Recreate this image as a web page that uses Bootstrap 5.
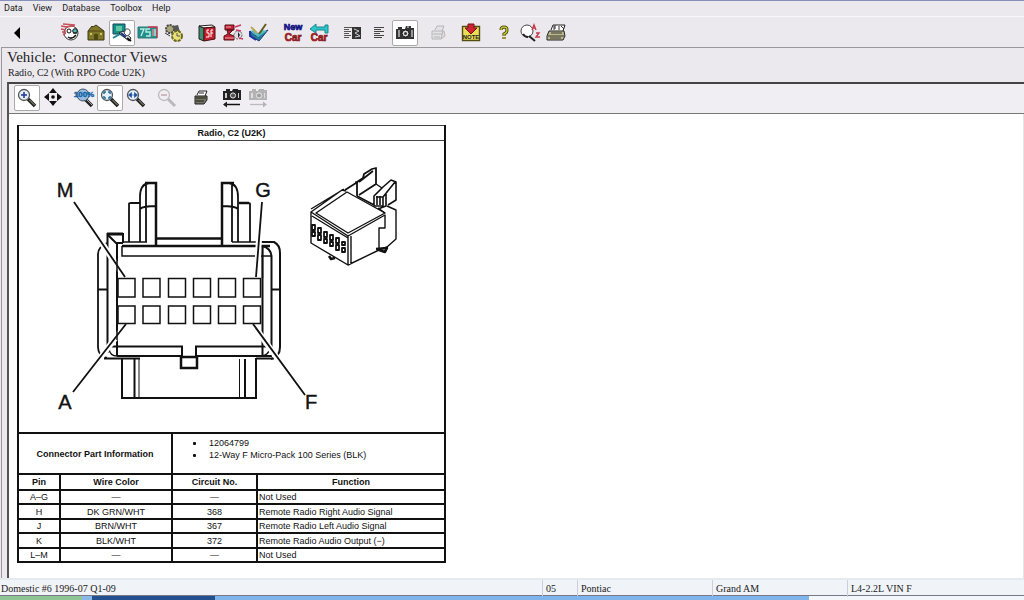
<!DOCTYPE html>
<html lang="en">
<head>
<meta charset="utf-8">
<meta name="viewport" content="width=device-width, initial-scale=1">
<title>Vehicle: Connector Views</title>
<link href="https://cdn.jsdelivr.net/npm/bootstrap@5.3.0/dist/css/bootstrap.min.css" rel="stylesheet">
<style>
:root{--face:#ece9ee;--ink:#222;}
body{background:var(--face);color:var(--ink);font-family:"Liberation Serif",serif;}
.menubar{height:17px;border-top:1px solid #8790b8;padding-left:4px;gap:10px;font:9px/14px Roboto,sans-serif;border-bottom:1px solid #f8f8fa;}
.menubar a{color:#222;text-decoration:none;}
.toolstrip{height:30px;}
.main-tools{padding:3px 0 0 5px;}
.view-tools{padding:1px 0 0 5px;border-bottom:1px solid #777;background:#f0eef2;}
.tool{width:26px;height:26px;padding:0;border:1px solid transparent;border-radius:2px;background:none;display:block;flex:none;}
.tool.on{background:#fff;border-color:#aaa;}
.tool svg,.sheet svg{display:block;}
.g4{margin-left:5px}.g7{margin-left:7px}.g8{margin-left:8px}.g26{margin-left:26px}
.pane{border-top:1px solid #999;border-left:1px solid #999;margin-left:1px;}
.pane h1{font-size:15px;font-weight:400;line-height:19px;margin:0;padding:0 0 0 5px;white-space:pre;}
.pane h2{font-size:10px;line-height:12px;margin:0;padding:0 0 3px 6px;font-weight:400;}
.viewer{margin-left:5px;border-top:2px solid #444;border-left:2px solid #555;}
.canvas-area{background:#fff;padding:11px 0 0 8px;border-right:1px solid #e4e4e4;}
.sheet{width:429px;table-layout:fixed;border-collapse:collapse;border:2px solid #111;border-top:1px solid #444;font:9px/12px "Liberation Sans",sans-serif;color:#111;text-align:center;}
.sheet td,.sheet th{border:2px solid #111;padding:0 1px;height:14px;}
.sheet .heading th{border:1px solid #444;height:15px;}
.sheet .figure-row td{padding:0;border-top:1px solid #444;}
.sheet .info-row>*{height:41px;}
.sheet .cols th{height:16px;}
.sheet .pin-row:nth-child(even) td{height:15px;}
.sheet td:last-child{text-align:left;}
.sheet ul{margin:0;padding-left:35px;list-style:none;height:34px;}
.sheet li{position:relative}
.sheet li::before{content:"";position:absolute;left:-16px;top:5px;width:3px;height:3px;background:#111;border-radius:1px;}
.status{display:grid;grid-template-columns:1fr 35px 135px 135px 177px;height:18px;border-top:2px solid #e4eaee;background:#f0f3f7;font-size:10px;line-height:17px;border-bottom:1px solid #778;}
.status span{padding-left:3px;border-left:1px solid #ccd;}
.status span:first-child{padding-left:1px;border:0;}
.taskbar{height:4px;background:#f3f6fa;}
.taskbar i{display:block;height:4px;}
.t1{width:8%;background:#8fc494}.t2{width:1%;background:#8ab8ea}.t3{width:12%;background:#24508f}.t4{width:58%;background:#7fb5ea}
</style>
</head>
<body class="vh-100 d-flex flex-column overflow-hidden">
<nav class="menubar d-flex flex-shrink-0" aria-label="Menu">
<a href="#">Data</a><a href="#">View</a><a href="#">Database</a><a href="#">Toolbox</a><a href="#">Help</a>
</nav>

<div class="toolstrip main-tools d-flex flex-shrink-0" role="toolbar" aria-label="Main tools">
<button class="tool" aria-label="Back"><svg width="24" height="24"><path d="M8 12l6-6v12z" fill="#000"/></svg></button>
<button class="tool g26" aria-label="Driver"><svg width="24" height="24"><circle cx="13" cy="12" r="7" fill="#fff" stroke="#333"/><path d="M3 5l6 1M3 8l5 1M4 11l4 0M5 14l3-2M5 3l12 1M7 6l9-1" stroke="#c85058" stroke-width="1.3" fill="none"/><circle cx="11" cy="10" r="2" fill="#fff" stroke="#111"/><circle cx="17" cy="10" r="2.300" fill="#5bb" stroke="#111"/><path d="M10 16q4 3 8-2" fill="none" stroke="#111" stroke-width="1.500"/><path d="M15 12h4" stroke="#111"/></svg></button>
<button class="tool" aria-label="Garage"><svg width="24" height="24"><path d="M4 10l4-5 1 1 3-2 8 6v9H4z" fill="#807828" stroke="#3b3810"/><path d="M4 10h16" stroke="#4c4716"/><path d="M10 13h4v6h-4z" fill="#4c4716"/><path d="M6 12h2v2H6zM16 12h2v2h-2z" fill="#cfc55a"/></svg></button>
<button class="tool on" aria-label="Diagnostics"><svg width="24" height="24"><path d="M3 3h12v10H3z" fill="#189080" stroke="#146"/><path d="M6 5h6v5H6z" fill="#5dc8a8"/><path d="M3 17l7-4 8 5" stroke="#288" stroke-width="2" fill="none"/><path d="M9 12l4-2 8 7-2 3z" fill="#eee" stroke="#222"/><path d="M16 8q5-1 4 5l-3 2-3-3z" fill="#fff" stroke="#555"/><path d="M11 12l5 4" stroke="#238" stroke-width="2"/><path d="M17 17l4 3" stroke="#111" stroke-width="2"/></svg></button>
<button class="tool" aria-label="Codes"><svg width="24" height="24"><path d="M2 6h19v11H2z" fill="#238f8c" stroke="#377"/><path d="M4 8h4l-3 7M14 8h-4v3h4v4h-4M17 8v7M19 8v7" stroke="#b6efe2" fill="none" stroke-width="1.400"/><path d="M12 6h9v11" fill="none" stroke="#d23a50" stroke-width="1.300"/><path d="M17 8v7" stroke="#d23a50"/></svg></button>
<button class="tool" aria-label="Parts"><svg width="24" height="24"><circle cx="8" cy="8" r="4" fill="#aaa678" stroke="#444" stroke-width="2" stroke-dasharray="2 1"/><path d="M11 5l5-1 2 7-5 3z" fill="#555"/><circle cx="15" cy="15" r="5" fill="#e8e277" stroke="#6b681e" stroke-width="2" stroke-dasharray="3 1"/><path d="M15 12v3h3" stroke="#555" fill="none"/><path d="M3 12l5 3" stroke="#333"/></svg></button>
<button class="tool g7" aria-label="Manual"><svg width="24" height="24"><path d="M4 5l5 2v13l-5-2z" fill="#438c74" stroke="#222"/><path d="M4 5l13-1 3 2-11 1z" fill="#fff" stroke="#222"/><path d="M9 7l11-1v12L9 20z" fill="#c62031" stroke="#411"/><path d="M14 9h-2v3h2v4h-3M16 16V9h2M16 12h2" stroke="#fff" fill="none"/></svg></button>
<button class="tool" aria-label="Engine"><svg width="24" height="24"><path d="M4 4h9v5H4zM6 9l6 0-4 4 5 2v4H3v-4l4-2z" fill="#c32038" stroke="#511"/><path d="M4 17h9M5 6h5" stroke="#eaa"/><circle cx="17" cy="14" r="4" fill="#ddd" stroke="#666" stroke-dasharray="2 1"/><path d="M14 6l6-2M15 9l5 1M18 17l4 1" stroke="#c36" stroke-width="1.400"/><path d="M17 11l2 3-2 3z" fill="#223"/></svg></button>
<button class="tool" aria-label="Maintenance"><svg width="24" height="24"><path d="M3 10l6 5 12-6-9 11-8-5z" fill="#227c99" stroke="#173a78"/><path d="M3 10l4-1 4 3 4-3 5 1-9 6z" fill="#53b9c4"/><path d="M3 10v5l6 4" stroke="#2433a4" stroke-width="2" fill="none"/><path d="M19 3l-7 10" stroke="#61601b" stroke-width="2"/><path d="M4 6l6 6" stroke="#b8a958" stroke-width="2"/></svg></button>
<button class="tool g8" aria-label="New car"><svg width="24" height="24" font-family="Liberation Sans,sans-serif" font-weight="700" text-anchor="middle"><text x="12" y="9" font-size="9" fill="#2424b5" stroke="#11117a" stroke-width=".7">New</text><text x="12" y="20" font-size="10" fill="#d9232b" stroke="#78151a" stroke-width=".7">Car</text></svg></button>
<button class="tool" aria-label="Previous car"><svg width="24" height="24"><path d="M3 8l6-5v3h9V4h3v8h-3V9H9v3z" fill="#2fc5cc" stroke="#19868a"/><text x="12" y="20" font-size="10" fill="#d9232b" stroke="#78151a" stroke-width=".7" font-family="Liberation Sans,sans-serif" font-weight="700" text-anchor="middle">Car</text></svg></button>
<button class="tool g8" aria-label="Text and picture"><svg width="24" height="24"><path d="M3 6.500h8M3 8.500h5M3 10.500h7M3 12.500h5M3 14.500h7M3 16.500h5" stroke="#555"/><path d="M11 6h9v12h-9z" fill="#333"/><path d="M13 8l5 2-4 2 5 3-5 1" stroke="#ccc" fill="none"/></svg></button>
<button class="tool" aria-label="Text"><svg width="24" height="24"><path d="M7 6.500h10M7 8.500h7M7 10.500h10M7 12.500h6M7 14.500h10M7 16.500h8" stroke="#444"/></svg></button>
<button class="tool on" aria-label="Pictures"><svg width="24" height="24"><path d="M3 8h2V6h4v2h3l1-3h5v2h3v11H3z" fill="#333"/><path d="M5 9h2v7H5zM18 9h2v7h-2z" fill="#999"/><circle cx="12.500" cy="12.500" r="3.500" fill="#ddd" stroke="#111"/><path d="M11 11l3 3M14 6h2" stroke="#eee"/><circle cx="12.500" cy="12.500" r="1.500" fill="#333"/></svg></button>
<button class="tool g7" aria-label="Print" disabled><svg width="24" height="24" stroke="#b5b5b8" fill="#e3e3e5"><path d="M9 9l2-4h7l-2 5M6 10h12l1 5-4 3H6z"/><path d="M7 13h9M8 16h6M17 10l-2 8"/></svg></button>
<button class="tool g7" aria-label="Note"><svg width="24" height="24"><path d="M3.500 5.500h17v14h-17z" fill="#e9de56" stroke="#544d14" stroke-width="1.400"/><path d="M9 3h6v4h3l-6 6-6-6h3z" fill="#cf2436" stroke="#711"/><text x="12" y="18" font-size="6" font-weight="700" text-anchor="middle" font-family="Liberation Sans,sans-serif" fill="#222">NOTE</text></svg></button>
<button class="tool g7" aria-label="Help"><svg width="24" height="24"><path d="M9 9q0-3 3-3t3 3-3 4v2M12 16v2" stroke="#3c390b" stroke-width="3" fill="none"/><path d="M9 9q0-3 3-3t3 3-3 4v2M12 16v2" stroke="#c3c629" stroke-width="1.400" fill="none"/></svg></button>
<button class="tool" aria-label="Index search"><svg width="24" height="24"><circle cx="9" cy="10" r="6" fill="#fff" stroke="#444"/><path d="M5 13q2 3 5 3M11 15l6 5" stroke="#222" stroke-width="2" fill="none"/><path d="M14 9l2-5 2 5M15 7h2M18 12h3l-3 4h4" stroke="#c73b4c" stroke-width="1.400" fill="none"/></svg></button>
<button class="tool" aria-label="Fax"><svg width="24" height="24"><path d="M7 9l2-5h12l-2 6" fill="#fff" stroke="#222"/><path d="M5 10h15l1 5-2 4H3v-4z" fill="#bdb98d" stroke="#222"/><path d="M4 15h16M6 17h11M7 12h11" stroke="#333"/><path d="M10 5h2M10 7h2M10 5v4M15 5v4M17 5l3 3" stroke="#333"/></svg></button>
</div>

<section class="pane d-flex flex-column flex-grow-1">
<h1>Vehicle:  Connector Views</h1>
<h2>Radio, C2 (With RPO Code U2K)</h2>
<div class="viewer d-flex flex-column flex-grow-1">
<svg width="0" height="0" class="position-absolute" aria-hidden="true"><defs>
<g id="lens"><path d="M13 13l7 7" stroke="#222" stroke-width="3.500"/><path d="M14.500 14l5 5" stroke="#a9a98a" stroke-width="1"/><circle cx="9" cy="9" r="5.500" fill="#e4f0fa" stroke="#555" stroke-width="1.300"/></g>
<g id="camera"><path d="M3 5h3V3h4v2h2l1-2h5v1h3v10H3z"/><path d="M5 7h2v5H5zM18 7h1v5h-1z" fill="#ccc"/><circle cx="13" cy="9.500" r="2.600" fill="#555" stroke="#e4e4e4"/></g>
</defs></svg>
<div class="toolstrip view-tools d-flex flex-shrink-0" role="toolbar" aria-label="Picture tools">
<button class="tool on" aria-label="Zoom in"><svg width="24" height="24"><use href="#lens"/><path d="M6 9h6M9 6v6" stroke="#22329c" stroke-width="1.500"/></svg></button>
<button class="tool" aria-label="Pan"><svg width="24" height="24"><path d="M12 2l4 5H8zM12 20l4-5H8zM3 11l5-4v8zM21 11l-5-4v8z" fill="#111"/><circle cx="12" cy="11" r="1.800" fill="#111"/></svg></button>
<button class="tool g4" aria-label="Actual size"><svg width="24" height="24"><path d="M13 13l7 7" stroke="#222" stroke-width="3.500"/><path d="M15 14l5 5" stroke="#aaa"/><circle cx="11" cy="9" r="6" fill="#9bd" stroke="#456"/><text x="12" y="11" font-size="8" font-family="Liberation Sans,sans-serif" font-weight="700" text-anchor="middle" fill="#1464a8" stroke="#1464a8" stroke-width=".4">100%</text></svg></button>
<button class="tool on" aria-label="Fit page"><svg width="24" height="24"><use href="#lens"/><path d="M6 8V6h2M10 6h2v2M12 10v2h-2M8 12H6v-2" stroke="#256c9e" stroke-width="1.500" fill="none"/></svg></button>
<button class="tool" aria-label="Fit width"><svg width="24" height="24"><use href="#lens"/><path d="M4.500 9l3-2.500v5zM13.500 9l-3-2.500v5zM7 9h4" fill="#1d4c9b" stroke="#1d4c9b" stroke-width=".6"/></svg></button>
<button class="tool g4" aria-label="Zoom out" disabled><svg width="24" height="24"><path d="M13 13l7 7" stroke="#b9b9bd" stroke-width="3"/><circle cx="9" cy="9" r="5.500" fill="#f0eef2" stroke="#bbb" stroke-width="1.300"/><path d="M6 9h6" stroke="#c2a8ae" stroke-width="1.500"/></svg></button>
<button class="tool g8" aria-label="Print"><svg width="24" height="24"><path d="M8 9l2-4h8l-2 5" fill="#fff" stroke="#222"/><path d="M6 10h12v4l-3 4H6z" fill="#777461" stroke="#222"/><path d="M7 12h10M7 15h8M10 7h5" stroke="#222"/></svg></button>
<button class="tool g4" aria-label="Previous picture"><svg width="24" height="24" fill="#222"><use href="#camera"/><path d="M4 18.500h16" stroke="#111" stroke-width="1.500"/><path d="M3 18.500l4-3v6z"/></svg></button>
<button class="tool" aria-label="Next picture" disabled><svg width="24" height="24" fill="#b5b5b8"><g opacity=".5"><use href="#camera" fill="#777"/></g><path d="M4 18.500h15" stroke="#bbb" stroke-width="1.300"/><path d="M21 18.500l-4-3v6z"/></svg></button>
</div>
<main class="canvas-area flex-grow-1">
<table class="sheet">
<colgroup><col style="width:42px"><col style="width:112px"><col style="width:85px"><col></colgroup>
<tbody>
<tr class="heading"><th colspan="4">Radio, C2 (U2K)</th></tr>
<tr class="figure-row"><td colspan="4">
<svg width="426" height="291" viewBox="19 141 426 291" fill="none" stroke="#111" stroke-width="1.500" role="img" aria-label="Connector face and perspective view">
<g>
<path d="M129 242V204q0-1 2-1h9M140 242V197q0-13 9-14h7v63M146 242V184M140 209q3-3 16-3" stroke-width="1.800"/>
<path d="M250 242V204q0-1-2-1h-9M238 242V197q0-13-9-14h-7v63M232 242V184M238 209q-3-3-16-3" stroke-width="1.800"/>
<path d="M145 183h11v62M234 183h-12v62M239 203h10" stroke-width="2.500"/>
<path d="M122 242h25M232 242h38" />
<path d="M156 238.500h66M122 246h148" stroke-width="2.500"/>
<path d="M107.500 353V234H123v9M107 234l9 9h7M117 243v113" stroke-width="2"/>
<path d="M107 234h16" stroke-width="3"/>
<path d="M107 243q-9 4-9 11v93q0 9 9 11M98 289.500h9" stroke-width="1.800"/>
<path d="M262 242h12q6 3 6 11v94q0 10-9 12M271 289.500h9M271.500 352V256q-1-8-9-10V356" stroke-width="2"/>
<path d="M122 246v10h149"/>
<path d="M109 346.500h73V356M268 346.500h-72V356" stroke-width="2"/>
<path d="M109 349q1 7 8 7M270 349q-2 6-8 7"/>
<path d="M117 356h65M196 356h76M104 358.500h36M256 358.500h18" stroke-width="2.200"/>
<path d="M181 357h16v11h-16z" stroke-width="2.500"/>
<path d="M122 358v40h134v-40M134.500 359v39M245 359v39" stroke-width="2"/>
<path d="M139 359v39M239.500 359v39" stroke-width="1"/>
</g>
<g stroke="#fff" stroke-width="6"><path d="M99 239l25 37M88 374l38-50M254 326l34 47M259 238l-2 36"/></g>
<path d="M117 243v35M117 300v5M117 325v15M262.500 246v32"/>
<path d="M74 202l51 75M262 202l-6 75M73 392l53-68M253 324l52 71" stroke-width="1.800"/>
<g fill="#fff" stroke-width="1.500">
<path d="M118 278.500h17v18.500h-17zM143 278.500h17v18.500h-17zM168.500 278.500h17v18.500h-17zM193.500 278.500h17v18.500h-17zM218.500 278.500h17v18.500h-17zM243.500 278.500h17v18.500h-17z"/>
<path d="M118 306h17v17.500h-17zM143 306h17v17.500h-17zM168.500 306h17v17.500h-17zM193.500 306h17v17.500h-17zM218.500 306h17v17.500h-17zM243.500 306h17v17.500h-17z"/>
</g>
<g fill="#111" stroke="#111" stroke-width=".4" font-family="Liberation Sans,sans-serif" font-size="20" text-anchor="middle"><text x="65" y="197">M</text><text x="263" y="197">G</text><text x="65" y="409">A</text><text x="311" y="409">F</text></g>
<g stroke-width="1.400" stroke-linejoin="round">
<path d="M311 212v31l37 22V236zM311 212l31-22 4 1M316 213l31-21 38 21-37 20zM348 236l37-21v13h-6v22l-31 15zM351 236v28M311 209l33-20M312 216l36 22"/>
<path d="M345 190l11-7M357 196v-14l6-4 1-4 8-5 4-1v16l-17 11M355 182l3 1M359 182l14-11" stroke-width="1.800"/>
<path d="M357 196l17 9M374 206v-10l9-9 8-7 5 2v18l-8 5M376 197h7v9h-9M383 197l12-15M377 196v9M380 196v9M386 194v12l-8 3" stroke-width="1.600"/>
<path d="M376 184l6 4M387 206l9 4v29l-9 8-8 3M378 208l7 5" />
<path d="M376 249l11-1-2 4-6-2M329 256l2 3 4-1" stroke-width="2.500"/>
<path d="M312 225h3v5h-3zM312 232h3v4h-3zM318 228h3v5h-3zM318 235h3v5h-3zM324 232h3v5h-3zM324 239h3v4h-3zM330 235h3v5h-3zM330 242h3v4h-3zM336 238h3v5h-3zM336 245h3v5h-3zM342 242h3v3h-3zM342 248h3v4h-3z" stroke-width="1.800"/>
</g>
</svg></td></tr>
<tr class="info-row"><th colspan="2" scope="row">Connector Part Information</th><td colspan="2"><ul><li>12064799</li><li>12-Way F Micro-Pack 100 Series (BLK)</li></ul></td></tr>
<tr class="cols"><th>Pin</th><th>Wire Color</th><th>Circuit No.</th><th>Function</th></tr>
<tr class="pin-row"><td>A–G</td><td>—</td><td>—</td><td>Not Used</td></tr>
<tr class="pin-row"><td>H</td><td>DK GRN/WHT</td><td>368</td><td>Remote Radio Right Audio Signal</td></tr>
<tr class="pin-row"><td>J</td><td>BRN/WHT</td><td>367</td><td>Remote Radio Left Audio Signal</td></tr>
<tr class="pin-row"><td>K</td><td>BLK/WHT</td><td>372</td><td>Remote Radio Audio Output (−)</td></tr>
<tr class="pin-row"><td>L–M</td><td>—</td><td>—</td><td>Not Used</td></tr>
</tbody>
</table>
</main>
</div>
</section>

<footer class="flex-shrink-0">
<div class="status"><span>Domestic #6 1996-07 Q1-09</span><span>05</span><span>Pontiac</span><span>Grand AM</span><span>L4-2.2L VIN F</span></div>
<div class="taskbar d-flex"><i class="t1"></i><i class="t2"></i><i class="t3"></i><i class="t4"></i></div>
</footer>
<script src="https://cdn.jsdelivr.net/npm/bootstrap@5.3.0/dist/js/bootstrap.bundle.min.js"></script>
</body>
</html>
